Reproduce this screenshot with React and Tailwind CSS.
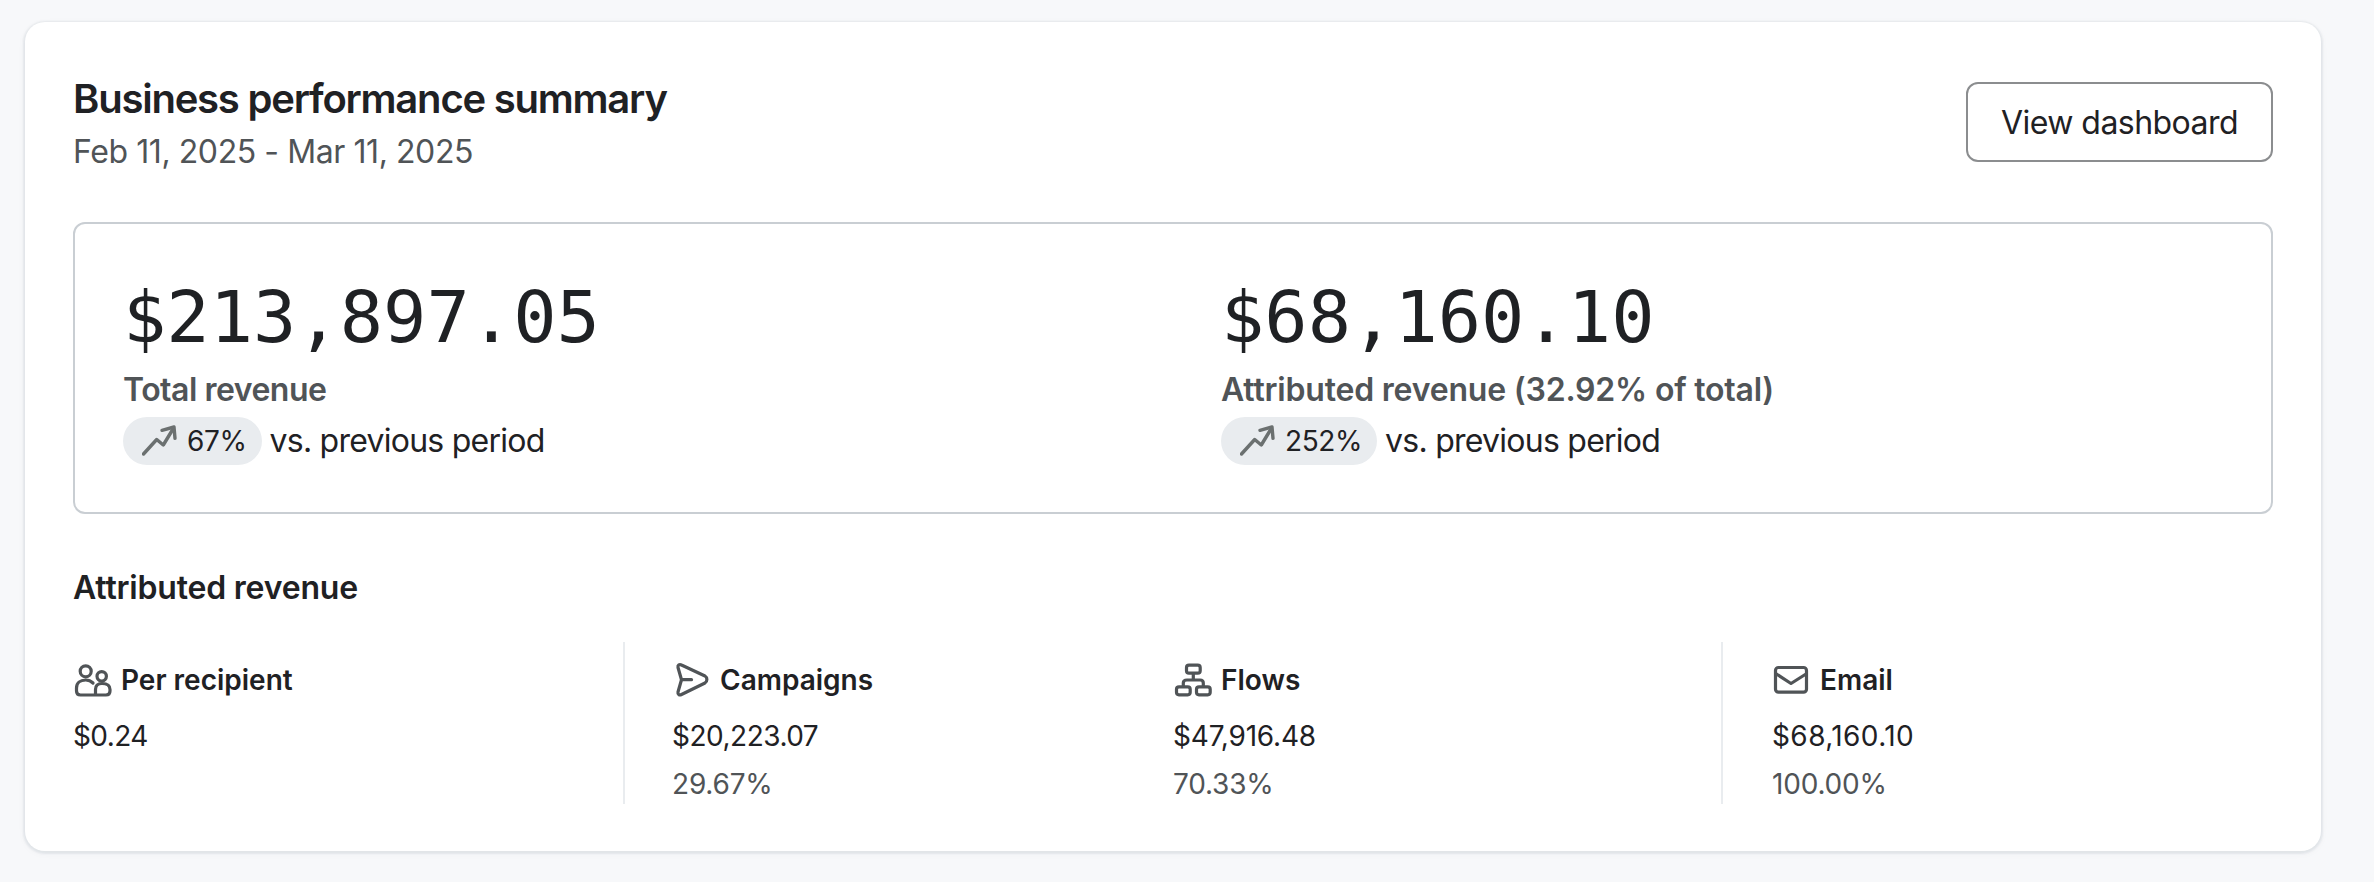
import React from 'react';

const TrendIcon = () => (
    <svg className="w-9 h-9 text-[#6b7070]" viewBox="0 0 36 36" fill="none" stroke="currentColor" strokeWidth="3.4" strokeLinecap="round" strokeLinejoin="round">
        <path d="M1.5 31 L14.7 16.5 L21.3 22 L31 6" />
        <path d="M20 7.3 L32 4 L33 15.3" />
    </svg>
);

const PeopleIcon = () => (
    <svg className="w-10 h-10 text-[#505457]" viewBox="0 0 40 40" fill="none" stroke="currentColor" strokeWidth="3.2" strokeLinecap="round" strokeLinejoin="round">
        <circle cx="12.7" cy="11.3" r="5.5" />
        <circle cx="28.7" cy="16.3" r="4.7" />
        <path d="M3.5 28 C3.5 23 7 20 12.7 20 C15.5 20 18 21 20 23" />
        <path d="M22.5 35 V29.5 C22.5 25 25 23.5 29 23.5 C33.5 23.5 37 25 37 29.5 V31 C37 33.5 35.5 35 33 35 H7.5 C5 35 3.5 33.5 3.5 31 V28" />
    </svg>
);

const SendIcon = () => (
    <svg className="w-10 h-10 text-[#505457]" viewBox="0 0 40 40" fill="none" stroke="currentColor" strokeWidth="3.2" strokeLinecap="round" strokeLinejoin="round">
        <path d="M6 7.5 C5.5 5 7.5 4 9.5 5 L33 16 C35.5 17.5 35.5 21.5 33 23 L9.5 34.5 C7.5 35.5 5.5 34.5 6 32 L9.5 19.7 Z" />
        <path d="M9.5 19.7 H19.5" />
    </svg>
);

const FlowIcon = () => (
    <svg className="w-10 h-10 text-[#505457]" viewBox="0 0 40 40" fill="none" stroke="currentColor" strokeWidth="3.2" strokeLinecap="round" strokeLinejoin="round">
        <rect x="13.5" y="5.2" width="13.7" height="8" rx="2.5" />
        <rect x="3.5" y="26.8" width="13.7" height="8" rx="2.5" />
        <rect x="23.5" y="26.8" width="13.7" height="8" rx="2.5" />
        <path d="M20.3 14 V20 M10.3 26 V23 C10.3 21 12 20 14 20 H27 C29 20 30.3 21 30.3 23 V26" />
    </svg>
);

const MailIcon = () => (
    <svg className="w-10 h-10 text-[#505457]" viewBox="0 0 40 40" fill="none" stroke="currentColor" strokeWidth="3.2" strokeLinecap="round" strokeLinejoin="round">
        <rect x="3.5" y="7.5" width="31" height="24.7" rx="3" />
        <path d="M4.5 14 L19 23.5 L34 14" />
    </svg>
);

const Stat = ({ value, label, labelClass, change }) => (
    <div>
        <div className="font-['DejaVu_Sans_Mono',monospace] text-[72px] leading-[84px] text-[#1f2124]">{value}</div>
        <div className={`mt-[7px] text-[32px] leading-[48px] font-semibold text-[#505457] ${labelClass}`}>{label}</div>
        <div className="mt-[3px] flex items-center">
            <span className="flex items-center gap-[9px] h-[48px] pl-[19px] pr-[15px] rounded-full bg-[#e9ecef] text-[28px] tracking-[-0.4px] text-[#1f2124]">
                <TrendIcon />
                {change}
            </span>
            <span className="ml-[8px] text-[32px] tracking-[-0.75px] text-[#1f2124]">vs. previous period</span>
        </div>
    </div>
);

const Metric = ({ icon, name, amount, amountClass, percent }) => (
    <div>
        <div className="flex items-center gap-[8px] h-[40px]">
            {icon}
            <span className="text-[28px] font-semibold text-[#1f2124]">{name}</span>
        </div>
        <div className={`mt-[16px] text-[28px] leading-[40px] text-[#1f2124] ${amountClass}`}>{amount}</div>
        {percent && <div className="mt-[8px] text-[28px] leading-[40px] tracking-[-0.2px] text-[#505457]">{percent}</div>}
    </div>
);

export default function App() {
    return (
        <div className="min-h-screen bg-[#f7f8fa] pt-[22px] pl-[25px] pr-[53px] font-['Inter',sans-serif]">
            <div className="h-[829px] bg-white rounded-[20px] p-[48px] shadow-[0_1px_2px_2px_rgba(30,50,70,0.07),0_2px_8px_rgba(30,50,70,0.04)]">
                <div className="flex justify-between items-start">
                    <div>
                        <h1 className="pt-[1px] text-[40px] leading-[56px] font-semibold tracking-[-1.22px] text-[#1f2124]">Business performance summary</h1>
                        <p className="mt-[3px] text-[32px] leading-[44px] tracking-[-0.42px] text-[#505457]">Feb 11, 2025 - Mar 11, 2025</p>
                    </div>
                    <button className="mt-[12px] h-[80px] w-[307px] pt-[2px] rounded-[12px] border-2 border-[#8b8d8f] text-[32px] tracking-[-0.55px] text-[#1f2124]">View dashboard</button>
                </div>

                <div className="mt-[48px] grid grid-cols-2 gap-x-[96px] h-[292px] pt-[51px] px-[48px] rounded-[12px] border-2 border-[#c9ced3]">
                    <Stat value="$213,897.05" label="Total revenue" labelClass="tracking-[-0.5px]" change="67%" />
                    <Stat value="$68,160.10" label="Attributed revenue (32.92% of total)" labelClass="tracking-[-0.2px]" change="252%" />
                </div>

                <h2 className="mt-[52px] text-[32px] leading-[44px] font-semibold tracking-[-0.2px] text-[#1f2124]">Attributed revenue</h2>

                <div className="mt-[32px] grid grid-cols-4 h-[161px]">
                    <div className="pt-[18px]">
                        <Metric icon={<PeopleIcon />} name="Per recipient" amount="$0.24" amountClass="tracking-[-0.6px]" />
                    </div>
                    <div className="col-span-2 grid grid-cols-2 pt-[18px] px-[47px] border-x-2 border-[#e9ecef]">
                        <Metric icon={<SendIcon />} name="Campaigns" amount="$20,223.07" amountClass="tracking-[-0.5px]" percent="29.67%" />
                        <Metric icon={<FlowIcon />} name="Flows" amount="$47,916.48" amountClass="tracking-[-0.2px]" percent="70.33%" />
                    </div>
                    <div className="pt-[18px] pl-[49px]">
                        <Metric icon={<MailIcon />} name="Email" amount="$68,160.10" amountClass="tracking-[0.4px]" percent="100.00%" />
                    </div>
                </div>
            </div>
        </div>
    );
}
